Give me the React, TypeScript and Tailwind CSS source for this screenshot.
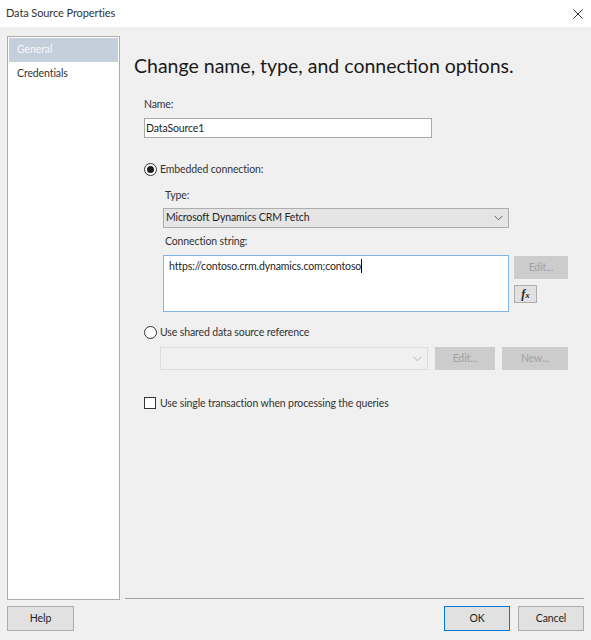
import React from "react"

const font = { fontFamily: 'Lato, "Noto Sans", sans-serif' }

function Btn({ children, className = "", disabled = false }: { children: React.ReactNode; className?: string; disabled?: boolean }) {
  return (
    <div
      className={
        "flex items-center justify-center text-[10.5px] tracking-[-0.1px] border " +
        (disabled ? "bg-[#cccccc] border-[#cccccc] text-[#a2a2a2] " : "bg-[#e1e1e1] border-[#adadad] text-[#1e1e1e] ") +
        className
      }
    >
      {children}
    </div>
  )
}

function Chevron({ color = "#606060" }: { color?: string }) {
  return (
    <svg width="9" height="6" viewBox="0 0 9 6" fill="none">
      <path d="M0.5 0.8 L4.5 4.8 L8.5 0.8" stroke={color} strokeWidth="1" />
    </svg>
  )
}

export default function App() {
  return (
    <div className="w-[591px] h-[640px] bg-[#f0f0f0] flex flex-col text-[#1e1e1e] overflow-hidden" style={font}>
      {/* title bar */}
      <div className="h-[27px] bg-white flex items-center justify-between pl-[6px] pr-[8px]">
        <span className="text-[11px] tracking-[-0.1px] text-[#333]">Data Source Properties</span>
        <svg width="10" height="10" viewBox="0 0 10 10">
          <path d="M0.5 0.5 L9.5 9.5 M9.5 0.5 L0.5 9.5" stroke="#333" strokeWidth="1" />
        </svg>
      </div>

      <div className="flex pt-[9px] px-[7px] h-[573px]">
        {/* left nav */}
        <div className="w-[113px] h-[564px] bg-white border border-[#acacac] p-px text-[10.5px] tracking-[-0.1px]">
          <div className="h-[24px] bg-[#c3cfdb] text-[#f7f7f7] pl-[8px] flex items-center">General</div>
          <div className="h-[24px] pl-[8px] flex items-center text-[#333]">Credentials</div>
        </div>

        {/* content */}
        <div className="flex-1 pl-[14px]">
          <div className="mt-[16px] h-[28px] text-[19.5px] leading-[28px] text-[#1a1a1a]">Change name, type, and connection options.</div>

          <div className="ml-[10px] text-[10.5px] tracking-[-0.12px]">
            <div className="mt-[16px] h-[16px] leading-[16px] text-[#333]">Name:</div>
            <div className="mt-[6px] w-[288px] h-[20px] bg-white border border-[#a9a9a9] leading-[18px] pl-[1px]">DataSource1</div>

            <div className="mt-[23px] h-[16px] flex items-center gap-[3px]">
              <div className="w-[13px] h-[13px] rounded-full border border-[#333] bg-white flex items-center justify-center">
                <div className="w-[7px] h-[7px] rounded-full bg-[#1e1e1e]" />
              </div>
              <span className="leading-[16px] text-[#333]">Embedded connection:</span>
            </div>

            <div className="ml-[19px]">
              <div className="mt-[10px] h-[16px] leading-[16px] pl-[2px] text-[#333]">Type:</div>
              <div className="mt-[5px] w-[346px] h-[20px] bg-[#e5e5e5] border border-[#adadad] flex items-center justify-between pl-[2px] pr-[5px]">
                <span>Microsoft Dynamics CRM Fetch</span>
                <Chevron />
              </div>
              <div className="mt-[5px] h-[16px] leading-[16px] pl-[2px] text-[#333]">Connection string:</div>
              <div className="mt-[6px] flex gap-[5px]">
                <div className="w-[346px] h-[57px] bg-white border border-[#7eb4ea] pl-[5px] pt-[2px] leading-[16px]">
                  https://contoso.crm.dynamics.com;contoso<span className="inline-block w-px h-[14px] bg-[#000] align-[-3px]" />
                </div>
                <div className="flex flex-col gap-[6px] pt-[1px]">
                  <Btn disabled className="w-[54px] h-[23px]">Edit...</Btn>
                  <Btn className="w-[23px] h-[18px]">
                    <span className="italic font-bold text-[12px] leading-none" style={{ fontFamily: '"Liberation Serif", serif' }}>
                      f<span className="text-[9px]">x</span>
                    </span>
                  </Btn>
                </div>
              </div>
            </div>

            <div className="mt-[12px] h-[16px] flex items-center gap-[3px]">
              <div className="w-[13px] h-[13px] rounded-full border border-[#333] bg-white" />
              <span className="leading-[16px] text-[#333]">Use shared data source reference</span>
            </div>

            <div className="ml-[16px] mt-[7px] flex gap-[7px]">
              <div className="w-[268px] h-[23px] bg-[#f0f0f0] border border-[#dcdcdc] flex items-center justify-end pr-[5px]">
                <Chevron color="#b5b5b5" />
              </div>
              <Btn disabled className="w-[60px] h-[23px]">Edit...</Btn>
              <Btn disabled className="w-[66px] h-[23px]">New...</Btn>
            </div>

            <div className="mt-[25px] h-[16px] flex items-center gap-[4px]">
              <div className="w-[12px] h-[12px] border border-[#333] bg-white" />
              <span className="leading-[16px] text-[#333]">Use single transaction when processing the queries</span>
            </div>
          </div>
        </div>
      </div>

      {/* footer */}
      <div className="px-[7px] flex flex-col">
        <div className="ml-[118px] -mt-[2px] h-px bg-[#a0a0a0]" />
        <div className="mt-[7px] flex justify-between">
          <Btn className="w-[67px] h-[25px]">Help</Btn>
          <div className="flex gap-[8px]">
            <Btn className="w-[66px] h-[25px] !border-[#0078d7]">OK</Btn>
            <Btn className="w-[66px] h-[25px]">Cancel</Btn>
          </div>
        </div>
      </div>
    </div>
  )
}
